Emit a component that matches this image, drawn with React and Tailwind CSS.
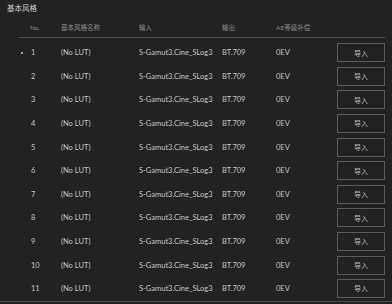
import React from "react";

const rows = Array.from({ length: 11 }, (_, i) => ({
  no: i + 1,
  name: "(No LUT)",
  input: "S-Gamut3.Cine_SLog3",
  output: "BT.709",
  ae: "0EV",
}));

export default function App() {
  return (
    <div
      className="flex h-[304px] w-[392px] flex-col overflow-hidden bg-[#222222] text-[#c4c4c4]"
      style={{ fontFamily: 'Lato, "Noto Sans CJK SC", sans-serif' }}
    >
      <div className="flex-1 overflow-hidden border-b border-[#4a4a4a]">
        <div className="h-[18px] pl-[7px] pt-[4px] text-[7.5px] leading-[10px] text-[#cccccc]">基本风格</div>
        <div className="ml-[19px] w-[366px]">
          <div className="flex h-[20px] items-center border-b border-[#4d4d4d] text-[6.5px] text-[#8a8a8a]">
            <div className="w-[42px] pl-[11px]">No.</div>
            <div className="w-[78px]">基本风格名称</div>
            <div className="w-[83px]">输入</div>
            <div className="w-[54px]">输出</div>
            <div className="w-[61px]">AE等级补偿</div>
          </div>
          <div className="pt-[3px]">
            {rows.map((row) => (
              <div key={row.no} className="flex h-[23.6px] items-center text-[7.5px]">
                <div className="flex w-[42px] items-center pl-[2px]">
                  <span className={row.no === 1 ? "h-[2px] w-[2px] bg-[#9a9a9a]" : "h-[2px] w-[2px]"} />
                  <span className="ml-[8px]">{row.no}</span>
                </div>
                <div className="w-[78px]">{row.name}</div>
                <div className="w-[83px]">{row.input}</div>
                <div className="w-[54px]">{row.output}</div>
                <div className="w-[61px]">{row.ae}</div>
                <button className="flex h-[19px] w-[48px] items-center justify-center border border-[#5a5a5a] text-[7px] text-[#bbbbbb]">
                  导入
                </button>
              </div>
            ))}
          </div>
        </div>
      </div>
      <div className="h-[2px]" />
    </div>
  );
}
